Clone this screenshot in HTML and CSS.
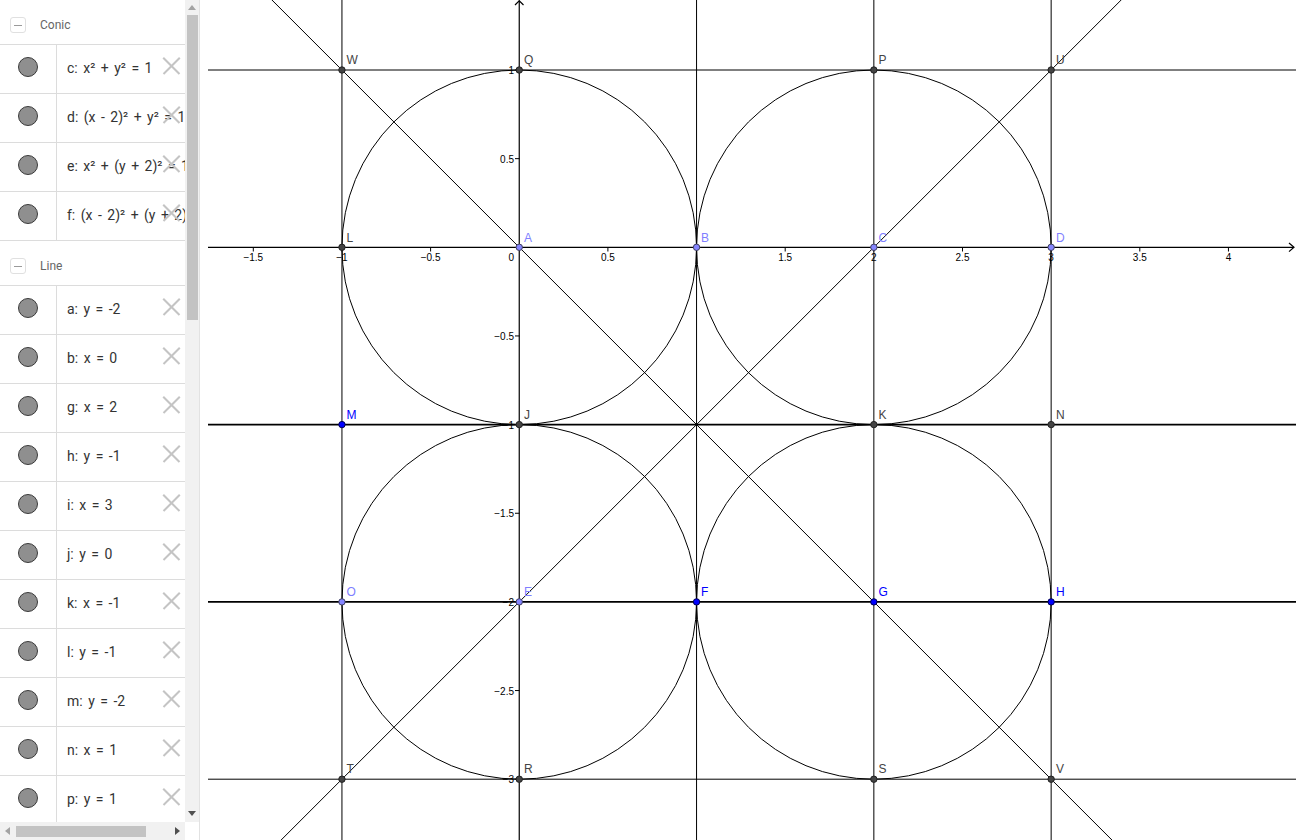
FILE: index.html
```html
<!DOCTYPE html>
<html>
<head>
<meta charset="utf-8">
<link rel="stylesheet" href="styles.css">
</head>
<body>
<div class="app">
  <aside class="algebra">
    <div class="view">
      <div class="list">
        <section class="group">
          <div class="group-head"><span class="toggle"><span class="minus"></span></span><span class="group-name">Conic</span></div>
          <div class="item"><div class="marble"><span class="dot"></span></div><div class="def">c: x² + y² = 1</div><span class="del"></span></div>
          <div class="item"><div class="marble"><span class="dot"></span></div><div class="def">d: (x - 2)² + y² = 1</div><span class="del"></span></div>
          <div class="item"><div class="marble"><span class="dot"></span></div><div class="def">e: x² + (y + 2)² = 1</div><span class="del"></span></div>
          <div class="item"><div class="marble"><span class="dot"></span></div><div class="def">f: (x - 2)² + (y + 2)² = 1</div><span class="del"></span></div>
        </section>
        <section class="group">
          <div class="group-head"><span class="toggle"><span class="minus"></span></span><span class="group-name">Line</span></div>
          <div class="item"><div class="marble"><span class="dot"></span></div><div class="def">a: y = -2</div><span class="del"></span></div>
          <div class="item"><div class="marble"><span class="dot"></span></div><div class="def">b: x = 0</div><span class="del"></span></div>
          <div class="item"><div class="marble"><span class="dot"></span></div><div class="def">g: x = 2</div><span class="del"></span></div>
          <div class="item"><div class="marble"><span class="dot"></span></div><div class="def">h: y = -1</div><span class="del"></span></div>
          <div class="item"><div class="marble"><span class="dot"></span></div><div class="def">i: x = 3</div><span class="del"></span></div>
          <div class="item"><div class="marble"><span class="dot"></span></div><div class="def">j: y = 0</div><span class="del"></span></div>
          <div class="item"><div class="marble"><span class="dot"></span></div><div class="def">k: x = -1</div><span class="del"></span></div>
          <div class="item"><div class="marble"><span class="dot"></span></div><div class="def">l: y = -1</div><span class="del"></span></div>
          <div class="item"><div class="marble"><span class="dot"></span></div><div class="def">m: y = -2</div><span class="del"></span></div>
          <div class="item"><div class="marble"><span class="dot"></span></div><div class="def">n: x = 1</div><span class="del"></span></div>
          <div class="item"><div class="marble"><span class="dot"></span></div><div class="def">p: y = 1</div><span class="del"></span></div>
        </section>
      </div>
      <div class="vscroll">
        <span class="arrow up"></span>
        <span class="vthumb"></span>
        <span class="vtrack"></span>
        <span class="arrow down"></span>
      </div>
    </div>
    <div class="hscroll">
      <span class="arrow left"></span>
      <span class="hthumb"></span>
      <span class="htrack"></span>
      <span class="arrow right"></span>
      <span class="corner"></span>
    </div>
  </aside>
  <div class="splitter"></div>
  <svg class="graphics" width="1088" height="840" viewBox="208 0 1088 840" xmlns="http://www.w3.org/2000/svg">
    <g class="lines" stroke="#000" stroke-width="1" fill="none">
      <line x1="341.95" y1="0" x2="341.95" y2="840"/>
      <line x1="696.55" y1="0" x2="696.55" y2="840"/>
      <line x1="873.85" y1="0" x2="873.85" y2="840"/>
      <line x1="1051.15" y1="0" x2="1051.15" y2="840"/>
      <line x1="208" y1="70" x2="1296" y2="70"/>
      <line x1="208" y1="424.6" x2="1296" y2="424.6" stroke-width="1.7"/>
      <line x1="208" y1="601.9" x2="1296" y2="601.9" stroke-width="1.7"/>
      <line x1="208" y1="779.2" x2="1296" y2="779.2"/>
      <line x1="164.65" y1="-107.3" x2="1228.45" y2="956.5"/>
      <line x1="164.65" y1="956.5" x2="1228.45" y2="-107.3"/>
      <circle cx="519.25" cy="247.3" r="177.3"/>
      <circle cx="873.85" cy="247.3" r="177.3"/>
      <circle cx="519.25" cy="601.9" r="177.3"/>
      <circle cx="873.85" cy="601.9" r="177.3"/>
    </g>
    <g class="axes" stroke="#000" stroke-width="1.2" fill="none">
      <line x1="208" y1="247.3" x2="1294" y2="247.3"/>
      <polyline points="1289,243 1294,247.3 1289,251.6"/>
      <line x1="519.25" y1="840" x2="519.25" y2="0.5"/>
      <polyline points="515,5 519.25,0.8 523.5,5"/>
    </g>
    <g class="ticks" stroke="#000" stroke-width="1">
      <line x1="253.3" y1="247" x2="253.3" y2="251.5"/>
      <line x1="341.95" y1="247" x2="341.95" y2="251.5"/>
      <line x1="430.6" y1="247" x2="430.6" y2="251.5"/>
      <line x1="607.9" y1="247" x2="607.9" y2="251.5"/>
      <line x1="696.55" y1="247" x2="696.55" y2="251.5"/>
      <line x1="785.2" y1="247" x2="785.2" y2="251.5"/>
      <line x1="873.85" y1="247" x2="873.85" y2="251.5"/>
      <line x1="962.5" y1="247" x2="962.5" y2="251.5"/>
      <line x1="1051.15" y1="247" x2="1051.15" y2="251.5"/>
      <line x1="1139.8" y1="247" x2="1139.8" y2="251.5"/>
      <line x1="1228.45" y1="247" x2="1228.45" y2="251.5"/>
      <line x1="515" y1="70" x2="519.5" y2="70"/>
      <line x1="515" y1="158.65" x2="519.5" y2="158.65"/>
      <line x1="515" y1="335.95" x2="519.5" y2="335.95"/>
      <line x1="515" y1="424.6" x2="519.5" y2="424.6"/>
      <line x1="515" y1="513.25" x2="519.5" y2="513.25"/>
      <line x1="515" y1="601.9" x2="519.5" y2="601.9"/>
      <line x1="515" y1="690.55" x2="519.5" y2="690.55"/>
      <line x1="515" y1="779.2" x2="519.5" y2="779.2"/>
    </g>
    <g class="axis-num xnum">
      <text x="253.3" y="261">−1.5</text>
      <text x="341.95" y="261">−1</text>
      <text x="430.6" y="261">−0.5</text>
      <text x="607.9" y="261">0.5</text>
      <text x="785.2" y="261">1.5</text>
      <text x="873.85" y="261">2</text>
      <text x="962.5" y="261">2.5</text>
      <text x="1051.15" y="261">3</text>
      <text x="1139.8" y="261">3.5</text>
      <text x="1228.45" y="261">4</text>
    </g>
    <g class="axis-num ynum">
      <text x="514" y="261">0</text>
      <text x="514" y="74">1</text>
      <text x="514" y="162.6">0.5</text>
      <text x="514" y="340">−0.5</text>
      <text x="514" y="428.6">−1</text>
      <text x="514" y="517.2">−1.5</text>
      <text x="514" y="605.9">−2</text>
      <text x="514" y="694.5">−2.5</text>
      <text x="514" y="783.2">−3</text>
    </g>
    <g class="pt dark">
      <circle cx="341.95" cy="70" r="3.2"/>
      <circle cx="519.25" cy="70" r="3.2"/>
      <circle cx="873.85" cy="70" r="3.2"/>
      <circle cx="1051.15" cy="70" r="3.2"/>
      <circle cx="341.95" cy="247.3" r="3.2"/>
      <circle cx="519.25" cy="424.6" r="3.2"/>
      <circle cx="873.85" cy="424.6" r="3.2"/>
      <circle cx="1051.15" cy="424.6" r="3.2"/>
      <circle cx="341.95" cy="779.2" r="3.2"/>
      <circle cx="519.25" cy="779.2" r="3.2"/>
      <circle cx="873.85" cy="779.2" r="3.2"/>
      <circle cx="1051.15" cy="779.2" r="3.2"/>
    </g>
    <g class="pt light">
      <circle cx="519.25" cy="247.3" r="3.2"/>
      <circle cx="696.55" cy="247.3" r="3.2"/>
      <circle cx="873.85" cy="247.3" r="3.2"/>
      <circle cx="1051.15" cy="247.3" r="3.2"/>
      <circle cx="341.95" cy="601.9" r="3.2"/>
      <circle cx="519.25" cy="601.9" r="3.2"/>
    </g>
    <g class="pt blue">
      <circle cx="341.95" cy="424.6" r="3.2"/>
      <circle cx="696.55" cy="601.9" r="3.2"/>
      <circle cx="873.85" cy="601.9" r="3.2"/>
      <circle cx="1051.15" cy="601.9" r="3.2"/>
    </g>
    <g class="lbl dark">
      <text x="346.5" y="64">W</text>
      <text x="524" y="64">Q</text>
      <text x="878.5" y="64">P</text>
      <text x="1056" y="64">U</text>
      <text x="346.5" y="241.5">L</text>
      <text x="524" y="418.5">J</text>
      <text x="878.5" y="418.5">K</text>
      <text x="1056" y="418.5">N</text>
      <text x="346.5" y="773">T</text>
      <text x="524" y="773">R</text>
      <text x="878.5" y="773">S</text>
      <text x="1056" y="773">V</text>
    </g>
    <g class="lbl light">
      <text x="524" y="241.5">A</text>
      <text x="701" y="241.5">B</text>
      <text x="878.5" y="241.5">C</text>
      <text x="1056" y="241.5">D</text>
      <text x="346.5" y="596">O</text>
      <text x="524" y="596">E</text>
    </g>
    <g class="lbl blue">
      <text x="346.5" y="418.5">M</text>
      <text x="701" y="596">F</text>
      <text x="878.5" y="596">G</text>
      <text x="1056" y="596">H</text>
    </g>
  </svg>
</div>
</body>
</html>
```
FILE: styles.css
```css
* { box-sizing: border-box; }
html, body { margin: 0; padding: 0; background: #fff; }
body { font-family: Roboto, "Noto Sans", sans-serif; overflow: hidden; }

.app { display: flex; width: 1296px; height: 840px; }

.algebra {
  width: 200px;
  flex: none;
  border-right: 1px solid #e2e2e2;
  display: flex;
  flex-direction: column;
}
.view { display: flex; height: 822px; }
.list { width: 185px; overflow: hidden; flex: none; }

.group { border-bottom: 1px solid #dcdcdc; }
.group-head {
  height: 44px;
  display: flex;
  align-items: center;
  padding-left: 10px;
  padding-top: 6px;
}
.toggle {
  width: 16px; height: 16px;
  border: 1px solid #e0e0e0;
  border-radius: 3px;
  display: flex; align-items: center; justify-content: center;
}
.minus { width: 8px; height: 1px; background: #9a9a9a; }
.group-name { margin-left: 14px; font-size: 12px; color: #666; }

.item {
  position: relative;
  display: flex;
  height: 49px;
  border-top: 1px solid #dcdcdc;
}
.marble {
  width: 57px;
  flex: none;
  border-right: 1px solid #dcdcdc;
  display: flex;
  align-items: center;
  justify-content: center;
  padding-bottom: 5px;
}
.dot {
  width: 20px; height: 20px;
  border-radius: 50%;
  background: #8f8f8f;
  border: 1px solid #3a3a3a;
}
.def {
  padding-left: 10px;
  padding-bottom: 2px;
  display: flex;
  align-items: center;
  white-space: nowrap;
  font-size: 14px;
  word-spacing: 2px;
  color: #333;
}
.del {
  position: absolute;
  left: 163px;
  top: 12px;
  width: 17px; height: 17px;
}
.del::before, .del::after {
  content: "";
  position: absolute;
  left: -3px; top: 8px;
  width: 23px; height: 1.6px;
  background: #c4c4c4;
}
.del::before { transform: rotate(45deg); }
.del::after { transform: rotate(-45deg); }

.vscroll {
  width: 14px;
  flex: none;
  background: #f1f1f1;
  display: flex;
  flex-direction: column;
  align-items: center;
}
.vthumb {
  width: 11px;
  height: 305px;
  margin-top: 1px;
  background: #c3c3c3;
}
.vtrack { flex: 1; }
.arrow { width: 0; height: 0; flex: none; }
.arrow.up {
  margin-top: 5px; margin-bottom: 4px;
  border-left: 4px solid transparent;
  border-right: 4px solid transparent;
  border-bottom: 5px solid #a3a3a3;
}
.arrow.down {
  margin-top: 4px; margin-bottom: 6px;
  border-left: 4px solid transparent;
  border-right: 4px solid transparent;
  border-top: 5px solid #505050;
}

.hscroll {
  height: 18px;
  display: flex;
  align-items: center;
  background: #f1f1f1;
}
.arrow.left {
  margin-left: 5px; margin-right: 6px;
  border-top: 4px solid transparent;
  border-bottom: 4px solid transparent;
  border-right: 5px solid #a3a3a3;
}
.hthumb { width: 130px; height: 11px; background: #c3c3c3; }
.htrack { flex: 1; }
.arrow.right {
  margin-right: 5px;
  border-top: 4px solid transparent;
  border-bottom: 4px solid transparent;
  border-left: 5px solid #505050;
}
.corner { width: 14px; height: 18px; background: #fff; }

.splitter { width: 8px; flex: none; background: #fff; }

.graphics { display: block; flex: none; }

.axis-num { font-family: "Liberation Sans", Arial, sans-serif; font-size: 10px; fill: #000; }
.xnum text { text-anchor: middle; }
.ynum text { text-anchor: end; }

.pt.dark circle { fill: #444; stroke: #222; stroke-width: 1; }
.pt.light circle { fill: #8585ff; stroke: #404060; stroke-width: 1; }
.pt.blue circle { fill: #0000ff; stroke: #000050; stroke-width: 1; }

.lbl { font-family: "Liberation Sans", Arial, sans-serif; font-size: 12px; }
.lbl.dark { fill: #444; }
.lbl.light { fill: #7f7fff; }
.lbl.blue { fill: #0000ff; }
```
